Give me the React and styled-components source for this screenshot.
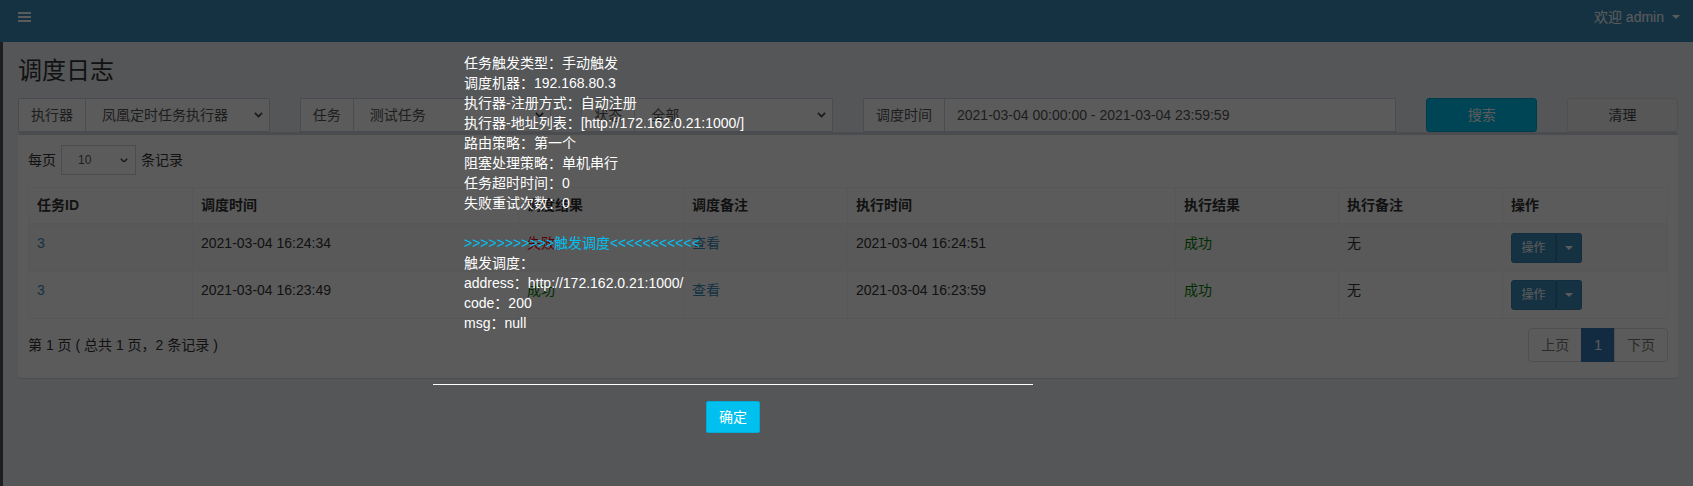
import styled, { createGlobalStyle, css } from 'styled-components';

const GlobalStyle = createGlobalStyle`
  html, body {
    margin: 0;
    padding: 0;
  }
  body {
    font-family: "Liberation Sans", Arial, "Noto Sans CJK SC", sans-serif;
    font-size: 14px;
    line-height: 20px;
    color: #333;
    background: #ecf0f5;
  }
  * {
    box-sizing: border-box;
  }
`;

const Page = styled.div`
  position: relative;
  min-height: 486px;
  background: #ecf0f5;
  overflow: hidden;
`;

const TopBar = styled.header`
  height: 42px;
  background: #3c8dbc;
  display: flex;
  justify-content: space-between;
  align-items: flex-start;
  padding: 0 13px 0 18px;
  color: #fff;
`;

const MenuToggle = styled.span`
  display: flex;
  margin-top: 12px;
`;

const UserMenu = styled.div`
  display: flex;
  align-items: center;
  gap: 8px;
  margin-top: 7px;
  line-height: 20px;
`;

const Caret = styled.span`
  display: inline-block;
  width: 0;
  height: 0;
  border-top: 4px solid ${({ color }) => color || 'currentColor'};
  border-left: 4px solid transparent;
  border-right: 4px solid transparent;
`;

const Main = styled.div`
  display: flex;
`;

const SideStrip = styled.aside`
  width: 3px;
  min-height: 444px;
  background: #51545c;
`;

const Content = styled.section`
  flex: 1;
  padding: 0 15px;
`;

const Title = styled.h1`
  margin: 17px 0 15px;
  font-size: 24px;
  line-height: 24px;
  font-weight: 400;
  color: #333;
`;

const FilterRow = styled.div`
  display: grid;
  grid-template-columns: repeat(12, 1fr);
  margin: 0 -15px;
`;

const Col = styled.div`
  grid-column: span ${({ span }) => span};
  padding: 0 15px;
`;

const InputGroup = styled.div`
  display: flex;
  height: 34px;
`;

const Addon = styled.span`
  display: flex;
  align-items: center;
  padding: 0 12px;
  border: 1px solid #d2d6de;
  border-right: none;
  background: #fff;
  color: #555;
  white-space: nowrap;
`;

const Field = styled.div`
  flex: 1;
  display: flex;
  align-items: center;
  justify-content: space-between;
  padding: ${({ plain }) => (plain ? '0 12px' : '0 6px 0 16px')};
  border: 1px solid #d2d6de;
  background: #fff;
  color: #555;
  white-space: nowrap;
`;

const Button = styled.div`
  height: 34px;
  display: flex;
  align-items: center;
  justify-content: center;
  border-radius: 3px;
  border: 1px solid #ddd;
  background: #f4f4f4;
  color: #444;
  ${({ variant }) =>
    variant === 'info' &&
    css`
      background: #00c0ef;
      border-color: #00acd6;
      color: #fff;
    `}
`;

const Box = styled.div`
  background: #fff;
  border-top: 3px solid #d2d6de;
  border-radius: 3px;
  box-shadow: 0 1px 1px rgba(0, 0, 0, 0.1);
  padding: 10px 10px 16px;
`;

const LengthRow = styled.div`
  display: flex;
  align-items: center;
  gap: 5px;
  height: 30px;
`;

const LengthSelect = styled.div`
  width: 75px;
  height: 30px;
  display: flex;
  align-items: center;
  justify-content: space-between;
  padding: 0 7px 0 16px;
  border: 1px solid #d2d6de;
  font-size: 12px;
  color: #555;
`;

const Table = styled.table`
  width: 100%;
  margin-top: 12px;
  border-collapse: collapse;
  table-layout: fixed;
  border: 1px solid #f4f4f4;
`;

const Th = styled.th`
  padding: 7px 8px 8px;
  text-align: left;
  font-weight: 700;
  border: 1px solid #f4f4f4;
  border-bottom-width: 2px;
`;

const Tr = styled.tr`
  background: ${({ odd }) => (odd ? '#f9f9f9' : '#fff')};
`;

const Td = styled.td`
  padding: 8px;
  vertical-align: top;
  border: 1px solid #f4f4f4;
  white-space: nowrap;
`;

const Link = styled.a`
  color: #3c8dbc;
  text-decoration: none;
`;

const Status = styled.span`
  color: ${({ ok }) => (ok ? 'green' : 'red')};
`;

const SplitButton = styled.div`
  display: inline-flex;
  height: 30px;
`;

const ActionPart = styled.span`
  display: flex;
  align-items: center;
  justify-content: center;
  background: #3c8dbc;
  border: 1px solid #367fa9;
  color: #fff;
  font-size: 12px;
  width: ${({ narrow }) => (narrow ? '26px' : '45px')};
  border-radius: ${({ narrow }) => (narrow ? '0 3px 3px 0' : '3px 0 0 3px')};
  ${({ narrow }) => narrow && 'border-left-color: #2e6f95;'}
`;

const FooterRow = styled.div`
  display: flex;
  justify-content: space-between;
  align-items: center;
  margin-top: 9px;
`;

const Pager = styled.ul`
  display: flex;
  margin: 0;
  padding: 0;
  list-style: none;
`;

const PageItem = styled.li`
  padding: 6px 12px;
  border: 1px solid #ddd;
  margin-left: -1px;
  background: #fff;
  color: #777;
  &:first-child {
    border-radius: 4px 0 0 4px;
  }
  &:last-child {
    border-radius: 0 4px 4px 0;
  }
  ${({ active }) =>
    active &&
    css`
      background: #337ab7;
      border-color: #337ab7;
      color: #fff;
    `}
`;

const Overlay = styled.div`
  position: absolute;
  inset: 0;
  background: rgba(0, 0, 0, 0.643);
  z-index: 10;
`;

const Dialog = styled.div`
  position: absolute;
  left: 433px;
  top: 53px;
  width: 600px;
  z-index: 11;
  color: #fff;
  font-size: 14px;
  line-height: 20px;
`;

const DialogBody = styled.div`
  padding: 0 0 51px 31px;
  white-space: nowrap;
`;

const Highlight = styled.span`
  color: #00c0ef;
`;

const DialogFoot = styled.div`
  border-top: 1px solid #fff;
  padding-top: 16px;
  text-align: center;
`;

const OkButton = styled.span`
  display: inline-block;
  height: 32px;
  padding: 0 12px;
  line-height: 30px;
  background: #00c0ef;
  border: 1px solid #00acd6;
  border-radius: 2px;
  color: #fff;
`;

const Chevron = ({ size = 9 }) => (
  <svg width={size} height={size * 0.6} viewBox="0 0 10 6" fill="none">
    <polyline points="1,1 5,5 9,1" stroke="#444" strokeWidth="1.8" />
  </svg>
);

const MenuIcon = () => (
  <svg width="13" height="10" viewBox="0 0 13 10" fill="#fff">
    <rect x="0" y="0" width="13" height="2" />
    <rect x="0" y="4" width="13" height="2" />
    <rect x="0" y="8" width="13" height="2" />
  </svg>
);

const columns = [164, 326, 165, 164, 328, 163, 164, 165];
const heads = ['任务ID', '调度时间', '调度结果', '调度备注', '执行时间', '执行结果', '执行备注', '操作'];

const logs = [
  { id: 3, trigger: '2021-03-04 16:24:34', triggerOk: false, handle: '2021-03-04 16:24:51' },
  { id: 3, trigger: '2021-03-04 16:23:49', triggerOk: true, handle: '2021-03-04 16:23:59' },
];

const triggerInfo = [
  '任务触发类型：手动触发',
  '调度机器：192.168.80.3',
  '执行器-注册方式：自动注册',
  '执行器-地址列表：[http://172.162.0.21:1000/]',
  '路由策略：第一个',
  '阻塞处理策略：单机串行',
  '任务超时时间：0',
  '失败重试次数：0',
];

const runInfo = ['触发调度：', 'address：http://172.162.0.21:1000/', 'code：200', 'msg：null'];

export default function App() {
  return (
    <Page>
      <GlobalStyle />
      <TopBar>
        <MenuToggle>
          <MenuIcon />
        </MenuToggle>
        <UserMenu>
          <span>欢迎 admin</span>
          <Caret />
        </UserMenu>
      </TopBar>
      <Main>
        <SideStrip />
        <Content>
          <Title>调度日志</Title>
          <FilterRow>
            <Col span={2}>
              <InputGroup>
                <Addon>执行器</Addon>
                <Field>
                  凤凰定时任务执行器
                  <Chevron />
                </Field>
              </InputGroup>
            </Col>
            <Col span={2}>
              <InputGroup>
                <Addon>任务</Addon>
                <Field>
                  测试任务
                  <Chevron />
                </Field>
              </InputGroup>
            </Col>
            <Col span={2}>
              <InputGroup>
                <Addon>状态</Addon>
                <Field>
                  全部
                  <Chevron />
                </Field>
              </InputGroup>
            </Col>
            <Col span={4}>
              <InputGroup>
                <Addon>调度时间</Addon>
                <Field plain>2021-03-04 00:00:00 - 2021-03-04 23:59:59</Field>
              </InputGroup>
            </Col>
            <Col span={1}>
              <Button variant="info">搜索</Button>
            </Col>
            <Col span={1}>
              <Button>清理</Button>
            </Col>
          </FilterRow>

          <Box>
            <LengthRow>
              每页
              <LengthSelect>
                10
                <Chevron size={8} />
              </LengthSelect>
              条记录
            </LengthRow>
            <Table>
              <colgroup>
                {columns.map((w, i) => (
                  <col key={i} style={{ width: w }} />
                ))}
              </colgroup>
              <thead>
                <tr>
                  {heads.map((h) => (
                    <Th key={h}>{h}</Th>
                  ))}
                </tr>
              </thead>
              <tbody>
                {logs.map((log, i) => (
                  <Tr key={i} odd={i % 2 === 0}>
                    <Td>
                      <Link>{log.id}</Link>
                    </Td>
                    <Td>{log.trigger}</Td>
                    <Td>
                      <Status ok={log.triggerOk}>{log.triggerOk ? '成功' : '失败'}</Status>
                    </Td>
                    <Td>
                      <Link>查看</Link>
                    </Td>
                    <Td>{log.handle}</Td>
                    <Td>
                      <Status ok>成功</Status>
                    </Td>
                    <Td>无</Td>
                    <Td>
                      <SplitButton>
                        <ActionPart>操作</ActionPart>
                        <ActionPart narrow>
                          <Caret />
                        </ActionPart>
                      </SplitButton>
                    </Td>
                  </Tr>
                ))}
              </tbody>
            </Table>
            <FooterRow>
              <span>第 1 页 ( 总共 1 页，2 条记录 )</span>
              <Pager>
                <PageItem>上页</PageItem>
                <PageItem active>1</PageItem>
                <PageItem>下页</PageItem>
              </Pager>
            </FooterRow>
          </Box>
        </Content>
      </Main>

      <Overlay />
      <Dialog>
        <DialogBody>
          {triggerInfo.map((line) => (
            <div key={line}>{line}</div>
          ))}
          <br />
          <Highlight>{'>>>>>>>>>>>触发调度<<<<<<<<<<<'}</Highlight>
          {runInfo.map((line) => (
            <div key={line}>{line}</div>
          ))}
        </DialogBody>
        <DialogFoot>
          <OkButton>确定</OkButton>
        </DialogFoot>
      </Dialog>
    </Page>
  );
}
